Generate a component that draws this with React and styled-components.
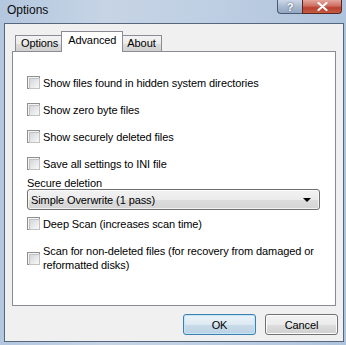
import React from "react";
import styled, { createGlobalStyle, css } from "styled-components";

const Global = createGlobalStyle`
  html, body { margin: 0; padding: 0; width: 346px; height: 345px; overflow: hidden; }
  body { font-family: "Liberation Sans", Arial, sans-serif; font-size: 11px; letter-spacing: -0.1px; color: #000; }
  * { box-sizing: border-box; }
`;

const Window = styled.div`
  width: 346px;
  height: 345px;
  display: flex;
  flex-direction: column;
  padding: 0 2px 3px 4px;
  background: linear-gradient(to right, #b3c7df 0%, #c6d4e5 30%, #bfcfe3 60%, #aec3dc 100%);
`;

const TitleBar = styled.div`
  height: 23px;
  display: flex;
  justify-content: space-between;
  align-items: flex-start;
  padding-left: 3px;
`;

const Title = styled.div`
  font-size: 12px;
  line-height: 15px;
  padding-top: 3px;
  letter-spacing: 0;
  color: #0b0b0b;
`;

const Caption = styled.div`
  display: flex;
  margin-right: 2px;
`;

const capBase = css`
  height: 14px;
  display: flex;
  align-items: center;
  justify-content: center;
  border: 1px solid #4a5a70;
  border-top: none;
  color: #fff;
  font-weight: bold;
`;

const HelpButton = styled.div`
  ${capBase};
  width: 25px;
  border-bottom-left-radius: 4px;
  border-right: none;
  background: linear-gradient(to bottom, #ccd8e7 0%, #aabbd1 50%, #93a7c2 100%);
  font-size: 11px;
  text-shadow: 0 0 2px #3d4e66;
`;

const CloseButton = styled.div`
  ${capBase};
  width: 40px;
  border-color: #5b2520;
  border-bottom-right-radius: 4px;
  background: linear-gradient(to bottom, #e3a69c 0%, #cf6f61 45%, #b9412f 60%, #c65c44 100%);
`;

const Client = styled.div`
  flex: 1;
  display: flex;
  flex-direction: column;
  border: 1px solid #56667c;
  background: #f0f0f0;
  padding: 7px 7px 0 7px;
`;

const TabStrip = styled.div`
  height: 20px;
  display: flex;
  align-items: flex-end;
  padding-left: 3px;
`;

const Tab = styled.div`
  height: 16px;
  line-height: 15px;
  padding: 0 5px;
  border: 1px solid #898c95;
  border-bottom: none;
  margin-right: -1px;
  background: linear-gradient(to bottom, #f3f3f3 0%, #ebebeb 50%, #dddddd 51%, #d0d0d0 100%);
  ${(p) =>
    p.$active &&
    css`
      position: relative;
      z-index: 1;
      height: 21px;
      line-height: 17px;
      margin: 0 -2px -1px -2px;
      padding: 0 6px;
      background: #fff;
    `}
`;

const Panel = styled.div`
  height: 255px;
  border: 1px solid #898c95;
  background: #fff;
  display: flex;
  flex-direction: column;
  padding: 17px 15px 0 14px;
`;

const CheckRow = styled.div`
  display: flex;
  align-items: center;
  gap: 3px;
  height: ${(p) => (p.$multi ? "auto" : "27px")};
  line-height: 14px;
  margin-top: ${(p) => (p.$multi ? "7px" : "0")};
`;

const Box = styled.span`
  flex: none;
  width: 13px;
  height: 13px;
  border: 1px solid #8f8f8f;
  padding: 1px;
  background: #f4f4f4;
  &::after {
    content: "";
    display: block;
    width: 100%;
    height: 100%;
    border: 1px solid #c2c2c2;
    background: linear-gradient(135deg, #d3d6da 0%, #e8e9eb 55%, #f8f8f8 100%);
  }
`;

const FieldLabel = styled.div`
  height: 12px;
  line-height: 12px;
`;

const Select = styled.div`
  height: 21px;
  display: flex;
  align-items: center;
  justify-content: space-between;
  padding: 0 8px 0 3px;
  border: 1px solid #707070;
  border-radius: 3px;
  background: linear-gradient(to bottom, #f2f2f2 0%, #ebebeb 50%, #dddddd 51%, #d4d4d4 100%);
  box-shadow: inset 0 0 0 1px rgba(255, 255, 255, 0.7);
`;

const Arrow = styled.span`
  width: 0;
  height: 0;
  border-left: 4px solid transparent;
  border-right: 4px solid transparent;
  border-top: 4px solid #000;
`;

const Footer = styled.div`
  display: flex;
  justify-content: flex-end;
  gap: 9px;
  padding: 8px 5px 0 0;
  margin-right: -7px;
`;

const Button = styled.div`
  width: 73px;
  height: 21px;
  display: flex;
  align-items: center;
  justify-content: center;
  border-radius: 3px;
  border: 1px solid #707070;
  box-shadow: inset 0 0 0 1px #fcfcfc;
  background: linear-gradient(to bottom, #f2f2f2 0%, #ebebeb 50%, #dddddd 51%, #cfcfcf 100%);
  ${(p) =>
    p.$default &&
    css`
      border-color: #3c7fb1;
      box-shadow: inset 0 0 0 1px #c4e5f6;
      background: linear-gradient(to bottom, #eaf3f9 0%, #dde9f2 50%, #c8dbe9 51%, #bcd2e3 100%);
    `}
`;

const Check = ({ children, multi }) => (
  <CheckRow $multi={multi}>
    <Box />
    <span>{children}</span>
  </CheckRow>
);

export default function App() {
  return (
    <>
      <Global />
      <Window>
        <TitleBar>
          <Title>Options</Title>
          <Caption>
            <HelpButton>?</HelpButton>
            <CloseButton>
              <svg width="11" height="9" viewBox="0 0 11 9">
                <path d="M1.5 1 L9.5 8 M9.5 1 L1.5 8" stroke="#fff" strokeWidth="2.2" strokeLinecap="round" />
              </svg>
            </CloseButton>
          </Caption>
        </TitleBar>
        <Client>
          <TabStrip>
            <Tab>Options</Tab>
            <Tab $active>Advanced</Tab>
            <Tab>About</Tab>
          </TabStrip>
          <Panel>
            <Check>Show files found in hidden system directories</Check>
            <Check>Show zero byte files</Check>
            <Check>Show securely deleted files</Check>
            <Check>Save all settings to INI file</Check>
            <FieldLabel>Secure deletion</FieldLabel>
            <Select>
              <span>Simple Overwrite (1 pass)</span>
              <Arrow />
            </Select>
            <Check>Deep Scan (increases scan time)</Check>
            <Check multi>
              Scan for non-deleted files (for recovery from damaged or
              <br />
              reformatted disks)
            </Check>
          </Panel>
          <Footer>
            <Button $default>OK</Button>
            <Button>Cancel</Button>
          </Footer>
        </Client>
      </Window>
    </>
  );
}
